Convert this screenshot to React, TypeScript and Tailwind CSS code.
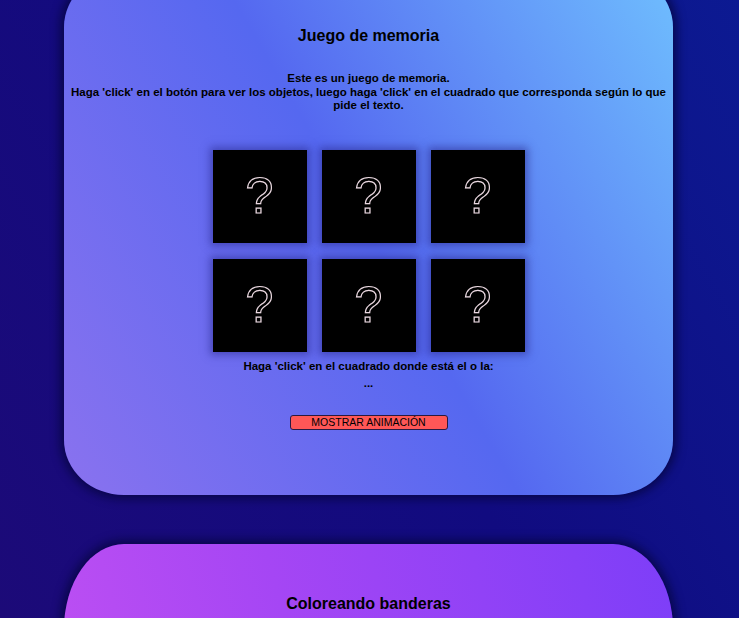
import React from "react";

const cells = [0, 1, 2, 3, 4, 5];

function MemoryCard() {
  return (
    <section className="w-[609px] ml-[64px] mt-[-28px] rounded-[60px/55px] bg-[linear-gradient(60deg,#8a72ef_0%,#5568f0_50%,#6fbefe_100%)] shadow-[0_0_10px_4px_rgba(5,5,60,0.75)] px-[5px] pt-[54px] pb-[65px] text-black">
      <h2 className="text-[16px] font-bold text-center leading-5">Juego de memoria</h2>

      <p className="mt-[26px] text-[11.5px] font-bold text-center leading-[13.5px]">
        Este es un juego de memoria.
        <br />
        Haga 'click' en el botón para ver los objetos, luego haga 'click' en el cuadrado que corresponda según lo que pide el texto.
      </p>

      {/* Board */}
      <div className="mt-[37px] grid grid-cols-[repeat(3,94px)] gap-x-[15px] gap-y-[16px] justify-center">
        {cells.map((c) => (
          <div
            key={c}
            className="h-[93px] bg-black flex items-center justify-center shadow-[0_0_8px_3px_rgba(40,40,140,0.55)]"
          >
            <span className="text-[50px] leading-none text-black [-webkit-text-stroke:1.2px_#ead8e0]">
              ?
            </span>
          </div>
        ))}
      </div>

      <p className="mt-[7px] text-[11.5px] font-bold text-center leading-[14px]">
        Haga 'click' en el cuadrado donde está el o la:
      </p>
      <p className="text-[11.5px] font-bold text-center leading-[14px] mt-[3px]">...</p>

      <div className="flex justify-center mt-[25px]">
        <button className="w-[158px] h-[15px] bg-[#ff5757] border border-[#2a1a40] rounded-[3px] text-[10.5px] leading-none text-black">
          MOSTRAR ANIMACIÓN
        </button>
      </div>
    </section>
  );
}

function FlagsCard() {
  return (
    <section className="w-[609px] ml-[64px] mt-[49px] rounded-[60px/85px] bg-[linear-gradient(75deg,#c552f2_0%,#a546f4_45%,#7d3ef8_100%)] shadow-[0_0_10px_4px_rgba(5,5,60,0.75)] px-[5px] pt-[50px] h-[500px] text-black">
      <h2 className="text-[16px] font-bold text-center leading-5">Coloreando banderas</h2>
    </section>
  );
}

export default function App() {
  return (
    <div className="h-[618px] overflow-hidden bg-[linear-gradient(60deg,#1c0a78_0%,#110b80_50%,#0c1a92_100%)] font-['Liberation_Sans',Arial,sans-serif]">
      <MemoryCard />
      <FlagsCard />
    </div>
  );
}
